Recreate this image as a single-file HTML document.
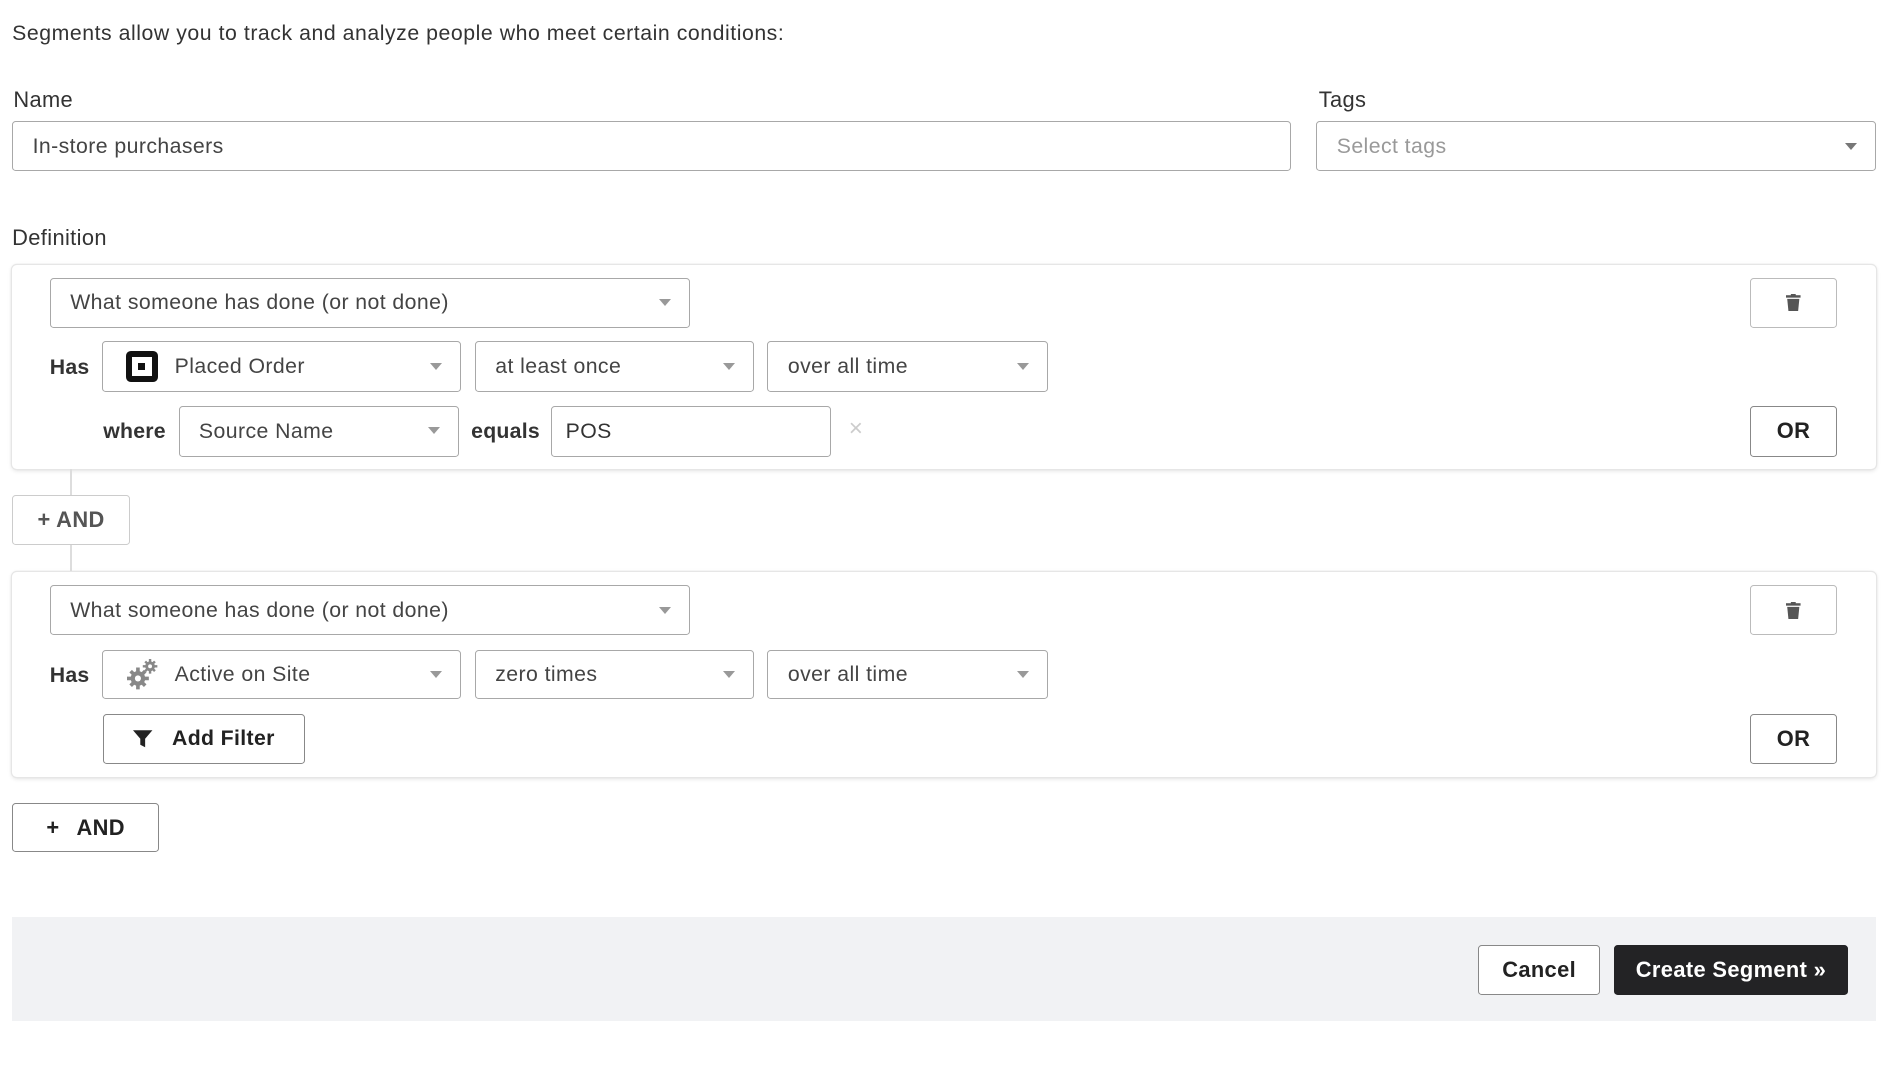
<!DOCTYPE html>
<html><head><meta charset="utf-8"><style>
html,body{margin:0;padding:0;background:#fff;width:1904px;height:1068px;overflow:hidden}
#w{zoom:1.2143;position:relative;width:1568px;height:880px;font-family:"Liberation Sans",sans-serif;color:#333}
.a{position:absolute;box-sizing:border-box}
.t{font-size:17.5px;color:#333;white-space:nowrap;letter-spacing:.45px}
.lbl{font-size:18px;color:#333;letter-spacing:.3px}
.in{border:1px solid #a8a8a8;border-radius:3px;background:#fff;font-size:17.5px;color:#444;display:flex;align-items:center;padding-left:16px;white-space:nowrap;letter-spacing:.35px}
.in .c{position:absolute;right:15px;top:50%;margin-top:-3px;width:0;height:0;border-left:5px solid transparent;border-right:5px solid transparent;border-top:6px solid #999}
.card{border-radius:4px;box-shadow:0 0 0 1px #e6e6e6,0 1px 4px rgba(0,0,0,.14);background:#fff}
.btn{border:1px solid #888;border-radius:3px;background:#fff;display:flex;align-items:center;justify-content:center;font-weight:bold;font-size:18px;color:#222;letter-spacing:.3px}
.b{font-weight:bold;font-size:17.5px;color:#333;letter-spacing:.2px}
</style></head><body><div id="w">
<div class="a t" style="left:10px;top:17px">Segments allow you to track and analyze people who meet certain conditions:</div>
<div class="a lbl" style="left:11px;top:72px">Name</div>
<div class="a lbl" style="left:1086px;top:72px">Tags</div>
<div class="a in" style="left:10px;top:100px;width:1053px;height:41px">In-store purchasers</div>
<div class="a in" style="left:1084px;top:100px;width:461px;height:41px;color:#999">Select tags<span class="c" style="border-top-color:#777"></span></div>
<div class="a lbl" style="left:10px;top:185px">Definition</div>

<div class="a card" style="left:10px;top:218px;width:1535px;height:168px"></div>
<div class="a in" style="left:41px;top:229px;width:527px;height:41px">What someone has done (or not done)<span class="c"></span></div>
<div class="a btn" style="left:1441px;top:229px;width:72px;height:41px;border-color:#bbb">
<svg width="12" height="14" viewBox="0 0 12 14"><rect x="0" y="1" width="12" height="2" fill="#555"/><rect x="4" y="0" width="4" height="2" fill="#555"/><path d="M1 4h10l-1 10H2z" fill="#555"/></svg></div>
<div class="a b" style="left:41px;top:292px">Has</div>
<div class="a in" style="left:84px;top:281px;width:296px;height:42px;padding-left:19px"><span style="display:inline-block;width:26px;height:26px;border:5px solid #111;border-radius:4px;box-sizing:border-box;position:relative;margin-right:14px;background:#fff"><span style="position:absolute;left:5px;top:5px;width:6px;height:6px;background:#111"></span></span>Placed Order<span class="c"></span></div>
<div class="a in" style="left:391px;top:281px;width:230px;height:42px">at least once<span class="c"></span></div>
<div class="a in" style="left:632px;top:281px;width:231px;height:42px">over all time<span class="c"></span></div>
<div class="a b" style="left:85px;top:345px">where</div>
<div class="a in" style="left:147px;top:334px;width:231px;height:42px">Source Name<span class="c"></span></div>
<div class="a b" style="left:388px;top:345px">equals</div>
<div class="a in" style="left:454px;top:334px;width:230px;height:42px;padding-left:11px;color:#333">POS</div>
<div class="a" style="left:699px;top:342px;font-size:20px;color:#ccc">×</div>
<div class="a btn" style="left:1441px;top:334px;width:72px;height:42px">OR</div>

<div class="a" style="left:58px;top:386px;width:1px;height:22px;background:#ddd"></div>
<div class="a btn" style="left:10px;top:408px;width:97px;height:41px;border-color:#ccc;color:#555">+ AND</div>
<div class="a" style="left:58px;top:449px;width:1px;height:22px;background:#ddd"></div>

<div class="a card" style="left:10px;top:471px;width:1535px;height:169px"></div>
<div class="a in" style="left:41px;top:482px;width:527px;height:41px">What someone has done (or not done)<span class="c"></span></div>
<div class="a btn" style="left:1441px;top:482px;width:72px;height:41px;border-color:#bbb">
<svg width="12" height="14" viewBox="0 0 12 14"><rect x="0" y="1" width="12" height="2" fill="#555"/><rect x="4" y="0" width="4" height="2" fill="#555"/><path d="M1 4h10l-1 10H2z" fill="#555"/></svg></div>
<div class="a b" style="left:41px;top:546px">Has</div>
<div class="a in" style="left:84px;top:535px;width:296px;height:41px;padding-left:20px"><svg width="26" height="26" viewBox="0 0 26 26" style="margin-right:13px"><g fill="#888"><circle cx="9" cy="16" r="6"/><g stroke="#888" stroke-width="3"><path d="M9 7v18M0 16h18M3 10l12 12M15 10L3 22"/></g><circle cx="9" cy="16" r="2.5" fill="#fff"/><circle cx="19" cy="6" r="4"/><g stroke="#888" stroke-width="2"><path d="M19 0v12M13 6h12M15 2l8 8M23 2l-8 8"/></g><circle cx="19" cy="6" r="1.6" fill="#fff"/></g></svg>Active on Site<span class="c"></span></div>
<div class="a in" style="left:391px;top:535px;width:230px;height:41px">zero times<span class="c"></span></div>
<div class="a in" style="left:632px;top:535px;width:231px;height:41px">over all time<span class="c"></span></div>
<div class="a btn" style="left:85px;top:588px;width:166px;height:41px;font-size:17.5px"><svg width="16" height="16" viewBox="0 0 16 16" style="margin-right:16px"><path d="M0 1h16L10 8v7l-4-2V8z" fill="#222"/></svg>Add Filter</div>
<div class="a btn" style="left:1441px;top:588px;width:72px;height:41px">OR</div>

<div class="a btn" style="left:10px;top:661px;width:121px;height:41px"><span style="margin-right:14px">+</span>AND</div>

<div class="a" style="left:10px;top:755px;width:1535px;height:86px;background:#f1f2f4"></div>
<div class="a btn" style="left:1217px;top:778px;width:101px;height:41px">Cancel</div>
<div class="a btn" style="left:1329px;top:778px;width:193px;height:41px;background:#232325;border-color:#232325;color:#fff">Create Segment »</div>
</div></body></html>
